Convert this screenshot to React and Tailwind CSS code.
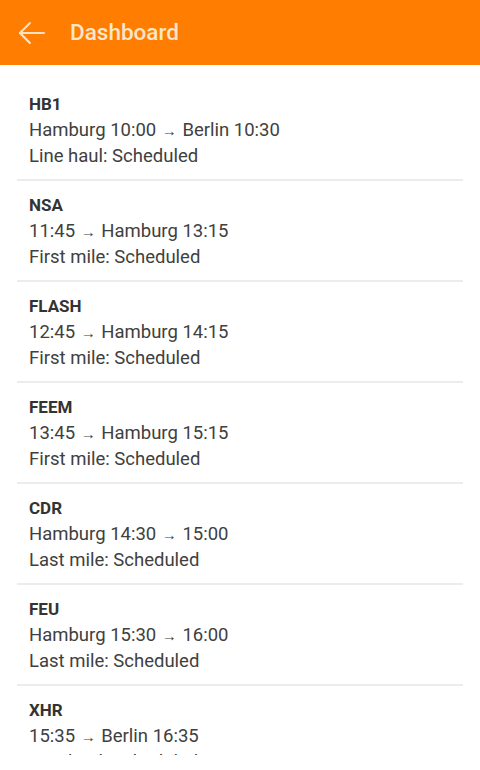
import React from "react";

const items = [
  ["HB1", "Hamburg 10:00", "Berlin 10:30", "Line haul: Scheduled"],
  ["NSA", "11:45", "Hamburg 13:15", "First mile: Scheduled"],
  ["FLASH", "12:45", "Hamburg 14:15", "First mile: Scheduled"],
  ["FEEM", "13:45", "Hamburg 15:15", "First mile: Scheduled"],
  ["CDR", "Hamburg 14:30", "15:00", "Last mile: Scheduled"],
  ["FEU", "Hamburg 15:30", "16:00", "Last mile: Scheduled"],
  ["XHR", "15:35", "Berlin 16:35", "Line haul: Scheduled"],
];

export default function App() {
  return (
    <div className="w-[480px] h-[770px] bg-white overflow-hidden" style={{ fontFamily: "Roboto, 'Noto Sans', sans-serif" }}>
      <header className="h-[65px] bg-[#ff7d00] flex items-center">
        <div className="w-[70px] flex items-center pl-[15px]">
          <svg width="34" height="34" viewBox="0 0 24 24" fill="none" stroke="#fde3c3" strokeWidth="1.5" strokeLinecap="round" strokeLinejoin="round">
            <path d="M20.5 12H3.5" />
            <path d="M10.5 5l-7 7 7 7" />
          </svg>
        </div>
        <h1 className="text-[22.5px] font-medium text-[#fde6c8] mt-[1px]">Dashboard</h1>
      </header>
      <div className="h-[690px] overflow-hidden">
        <ul className="mx-[17px] pt-[15px]">
          {items.map(([code, from, to, status]) => (
            <li key={code} className="px-3 pt-[11px] pb-[10px] border-b-2 border-[#ececec] text-[18.5px] leading-[26px] text-[#404040]">
              <div className="font-bold text-[17px] text-[#333]">{code}</div>
              <div>
                {from} <span className="inline-block mx-[1px] text-[15px] leading-none align-middle">→</span> {to}
              </div>
              <div>{status}</div>
            </li>
          ))}
        </ul>
      </div>
    </div>
  );
}
